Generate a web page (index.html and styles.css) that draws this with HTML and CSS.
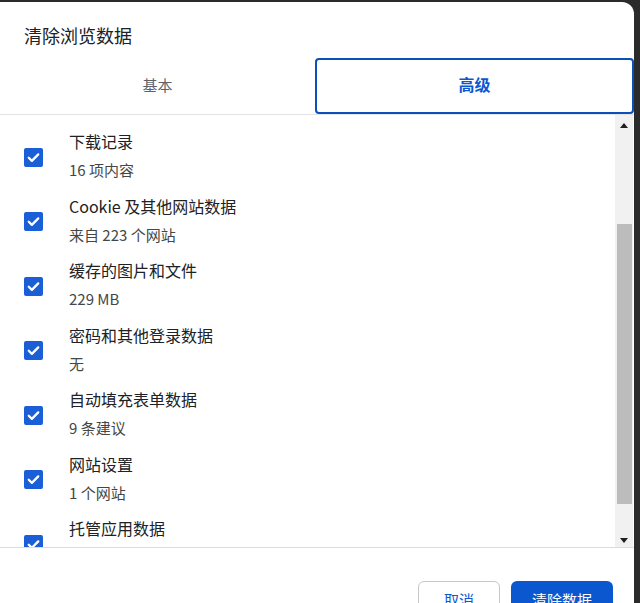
FILE: index.html
```html
<!DOCTYPE html>
<html lang="zh-CN">
<head>
    <meta charset="UTF-8">
    <title>清除浏览数据</title>
    <link rel="stylesheet" href="styles.css">
</head>
<body>
    <div class="dialog">
        <div class="dialog-title">清除浏览数据</div>

        <div class="tabs">
            <div class="tab">基本</div>
            <div class="tab tab-active">高级</div>
        </div>

        <div class="scroll-area">
            <div class="list">
                <div class="row">
                    <span class="checkbox"><svg viewBox="0 0 20 20"><path d="M5 10.3l3.3 3.2 6.7-6.8"/></svg></span>
                    <div class="row-text"><div class="row-title">下载记录</div><div class="row-sub">16 项内容</div></div>
                </div>
                <div class="row">
                    <span class="checkbox"><svg viewBox="0 0 20 20"><path d="M5 10.3l3.3 3.2 6.7-6.8"/></svg></span>
                    <div class="row-text"><div class="row-title">Cookie 及其他网站数据</div><div class="row-sub">来自 223 个网站</div></div>
                </div>
                <div class="row">
                    <span class="checkbox"><svg viewBox="0 0 20 20"><path d="M5 10.3l3.3 3.2 6.7-6.8"/></svg></span>
                    <div class="row-text"><div class="row-title">缓存的图片和文件</div><div class="row-sub">229 MB</div></div>
                </div>
                <div class="row">
                    <span class="checkbox"><svg viewBox="0 0 20 20"><path d="M5 10.3l3.3 3.2 6.7-6.8"/></svg></span>
                    <div class="row-text"><div class="row-title">密码和其他登录数据</div><div class="row-sub">无</div></div>
                </div>
                <div class="row">
                    <span class="checkbox"><svg viewBox="0 0 20 20"><path d="M5 10.3l3.3 3.2 6.7-6.8"/></svg></span>
                    <div class="row-text"><div class="row-title">自动填充表单数据</div><div class="row-sub">9 条建议</div></div>
                </div>
                <div class="row">
                    <span class="checkbox"><svg viewBox="0 0 20 20"><path d="M5 10.3l3.3 3.2 6.7-6.8"/></svg></span>
                    <div class="row-text"><div class="row-title">网站设置</div><div class="row-sub">1 个网站</div></div>
                </div>
                <div class="row">
                    <span class="checkbox"><svg viewBox="0 0 20 20"><path d="M5 10.3l3.3 3.2 6.7-6.8"/></svg></span>
                    <div class="row-text"><div class="row-title">托管应用数据</div><div class="row-sub">3 个应用</div></div>
                </div>
            </div>

            <div class="scrollbar">
                <span class="arrow arrow-up"></span>
                <div class="track"><div class="thumb"></div></div>
                <span class="arrow arrow-down"></span>
            </div>
        </div>

        <div class="footer">
            <button class="btn btn-cancel">取消</button>
            <button class="btn btn-primary">清除数据</button>
        </div>
    </div>
</body>
</html>
```

FILE: styles.css
```css
* { margin: 0; padding: 0; box-sizing: border-box; }
html, body { height: 100%; overflow: hidden; }
body { background: #2b2b2b; font-family: "Noto Sans CJK SC", "Noto Sans", sans-serif; color: #202124; padding-top: 2px; }
.dialog { width: 634px; height: 640px; background: #fff; border-top-right-radius: 12px; }
.dialog-title { padding: 19px 24px 0; font-size: 18px; line-height: 28px; height: 56px; }
.tabs { display: flex; height: 56px; }
.tab { flex: 1; display: flex; align-items: center; justify-content: center; padding-bottom: 4px; font-size: 15px; color: #5f6368; }
.tab-active { border: 2px solid #0b4fb8; border-radius: 4px; color: #0b57d0; font-weight: 700; font-size: 16px; }
.scroll-area { display: flex; height: 434px; border-top: 1px solid #e3e3e3; border-bottom: 1px solid #dadce0; overflow: hidden; }
.list { flex: 1; padding-top: 10px; }
.row { display: flex; align-items: center; height: 64.5px; padding-left: 24px; }
.checkbox { width: 19px; height: 19px; border-radius: 2px; background: #1a5fd6; display: flex; margin-right: 26px; }
.checkbox svg { width: 19px; height: 19px; fill: none; stroke: #fff; stroke-width: 2.4; stroke-linecap: round; stroke-linejoin: round; }
.row-title { font-size: 16px; line-height: 26px; margin: -3px 0 3px; }
.row-sub { font-size: 15px; line-height: 26px; color: #444746; }
.scrollbar { width: 18px; margin-right: 1px; background: #f1f1f1; display: flex; flex-direction: column; align-items: center; }
.arrow { width: 0; height: 0; border-left: 4px solid transparent; border-right: 4px solid transparent; margin: 8px 0; }
.arrow-up { border-bottom: 5px solid #202020; }
.arrow-down { border-top: 5px solid #202020; }
.track { flex: 1; width: 100%; padding: 88px 1px 26px 2px; }
.thumb { height: 280px; background: #bcbcbc; }
.footer { display: flex; justify-content: flex-end; gap: 11px; padding: 33px 21px 0 0; }
.btn { height: 36px; border-radius: 6px; font-family: inherit; font-size: 15px; white-space: nowrap; }
.btn-cancel { width: 82px; background: #fff; border: 1px solid #c7c7c7; color: #0b57d0; }
.btn-primary { width: 102px; background: #0b57d0; border: none; color: #fff; }
```
